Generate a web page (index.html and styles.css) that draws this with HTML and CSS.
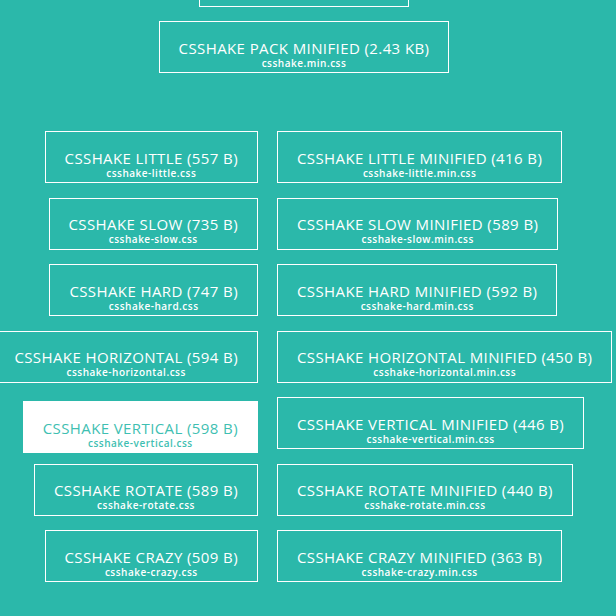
FILE: index.html
```html
<!DOCTYPE html>
<html lang="en">
<head>
    <meta charset="UTF-8">
    <meta name="viewport" content="width=device-width, initial-scale=1.0">
    <title>CSShake downloads</title>
    <link rel="stylesheet" href="styles.css">
</head>
<body>
    <div class="downloads">
        <div class="packs">
            <a class="btn btn-cut" href="#">CSSHAKE PACK (3.2 KB)<span>csshake.css</span></a>
            <a class="btn" href="#">CSSHAKE PACK MINIFIED (2.43 KB)<span>csshake.min.css</span></a>
        </div>

        <div class="singles">
            <a class="btn" href="#">CSSHAKE LITTLE (557 B)<span>csshake-little.css</span></a>
            <a class="btn" href="#">CSSHAKE LITTLE MINIFIED (416 B)<span>csshake-little.min.css</span></a>

            <a class="btn" href="#">CSSHAKE SLOW (735 B)<span>csshake-slow.css</span></a>
            <a class="btn" href="#">CSSHAKE SLOW MINIFIED (589 B)<span>csshake-slow.min.css</span></a>

            <a class="btn" href="#">CSSHAKE HARD (747 B)<span>csshake-hard.css</span></a>
            <a class="btn" href="#">CSSHAKE HARD MINIFIED (592 B)<span>csshake-hard.min.css</span></a>

            <a class="btn" href="#">CSSHAKE HORIZONTAL (594 B)<span>csshake-horizontal.css</span></a>
            <a class="btn" href="#">CSSHAKE HORIZONTAL MINIFIED (450 B)<span>csshake-horizontal.min.css</span></a>

            <a class="btn btn-hover" href="#">CSSHAKE VERTICAL (598 B)<span>csshake-vertical.css</span></a>
            <a class="btn" href="#">CSSHAKE VERTICAL MINIFIED (446 B)<span>csshake-vertical.min.css</span></a>

            <a class="btn" href="#">CSSHAKE ROTATE (589 B)<span>csshake-rotate.css</span></a>
            <a class="btn" href="#">CSSHAKE ROTATE MINIFIED (440 B)<span>csshake-rotate.min.css</span></a>

            <a class="btn" href="#">CSSHAKE CRAZY (509 B)<span>csshake-crazy.css</span></a>
            <a class="btn" href="#">CSSHAKE CRAZY MINIFIED (363 B)<span>csshake-crazy.min.css</span></a>
        </div>
    </div>
</body>
</html>
```

FILE: styles.css
```css
body {
    margin: 0;
    background-color: #2bb8aa;
    font-family: "Open Sans", "Noto Sans", sans-serif;
    color: #fff;
    overflow: hidden;
}
.downloads {
    display: flex;
    flex-direction: column;
}
.packs {
    width: 608px;
    display: flex;
    flex-direction: column;
    align-items: center;
    gap: 14px;
    margin-top: -45px;
}
.singles {
    display: grid;
    grid-template-columns: 258px 1fr;
    column-gap: 19px;
    row-gap: 14.5px;
    margin-top: 58px;
}
.singles .btn:nth-child(odd) {
    justify-self: end;
}
.singles .btn:nth-child(even) {
    justify-self: start;
}
.btn {
    display: flex;
    flex-direction: column;
    align-items: center;
    box-sizing: border-box;
    height: 52px;
    padding: 16.6px 19px 0;
    border: 1px solid #fff;
    color: #fff;
    text-decoration: none;
    font-size: 15px;
    line-height: 18px;
    letter-spacing: 0.4px;
    white-space: nowrap;
}
.btn span {
    font-size: 10px;
    line-height: 12px;
    font-weight: 600;
    letter-spacing: 0.5px;
}
.btn-cut span {
    visibility: hidden;
}
.btn-hover {
    background-color: #fff;
    color: #3fbfb2;
    transform: translateY(4px);
}
```
